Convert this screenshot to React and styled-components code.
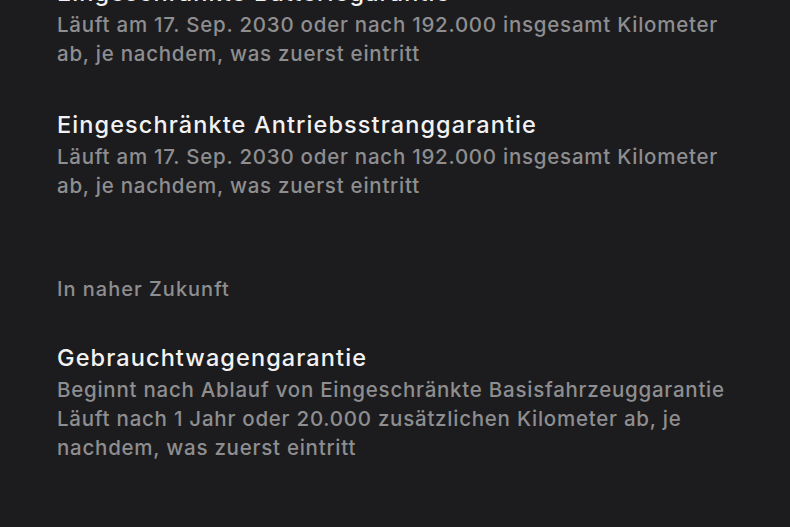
import React from "react";
import styled, { createGlobalStyle } from "styled-components";

const GlobalStyle = createGlobalStyle`
  html, body {
    margin: 0;
    padding: 0;
    background: #1c1c1e;
  }
  body {
    font-family: Inter, "Noto Sans", "Liberation Sans", sans-serif;
    -webkit-font-smoothing: antialiased;
  }
`;

const Screen = styled.div`
  width: 790px;
  height: 527px;
  overflow: hidden;
  background: #1c1c1e;
`;

// scrolled list, first entry is partly above the top edge
const List = styled.div`
  display: flex;
  flex-direction: column;
  padding-left: 57px;
  margin-top: -24px;
`;

const Item = styled.div`
  display: flex;
  flex-direction: column;
  margin-bottom: ${(p) => p.gap || 0}px;
`;

const Title = styled.div`
  color: #f2f2f2;
  font-size: 23.5px;
  font-weight: 500;
  letter-spacing: 1.1px;
  line-height: 34px;
  white-space: nowrap;
`;

const Desc = styled.div`
  color: #8e8e90;
  font-size: 20.5px;
  font-weight: 500;
  letter-spacing: 0.75px;
  line-height: 29px;
  white-space: nowrap;
  span {
    display: block;
  }
`;

const SectionLabel = styled.div`
  color: #8e8e90;
  font-size: 20px;
  font-weight: 500;
  letter-spacing: 1px;
  line-height: 29px;
  margin-bottom: 37px;
`;

const warranties = [
  {
    title: "Eingeschränkte Batteriegarantie",
    lines: [
      "Läuft am 17. Sep. 2030 oder nach 192.000 insgesamt Kilometer",
      "ab, je nachdem, was zuerst eintritt",
    ],
    gap: 40,
  },
  {
    title: "Eingeschränkte Antriebsstranggarantie",
    lines: [
      "Läuft am 17. Sep. 2030 oder nach 192.000 insgesamt Kilometer",
      "ab, je nachdem, was zuerst eintritt",
    ],
    gap: 75,
  },
];

const upcoming = [
  {
    title: "Gebrauchtwagengarantie",
    lines: [
      "Beginnt nach Ablauf von Eingeschränkte Basisfahrzeuggarantie",
      "Läuft nach 1 Jahr oder 20.000 zusätzlichen Kilometer ab, je",
      "nachdem, was zuerst eintritt",
    ],
  },
];

const Warranty = ({ title, lines, gap }) => (
  <Item gap={gap}>
    <Title>{title}</Title>
    <Desc>
      {lines.map((l) => (
        <span key={l}>{l}</span>
      ))}
    </Desc>
  </Item>
);

export default function App() {
  return (
    <Screen>
      <GlobalStyle />
      <List>
        {warranties.map((w) => (
          <Warranty key={w.title} {...w} />
        ))}
        <SectionLabel>In naher Zukunft</SectionLabel>
        {upcoming.map((w) => (
          <Warranty key={w.title} {...w} />
        ))}
      </List>
    </Screen>
  );
}
